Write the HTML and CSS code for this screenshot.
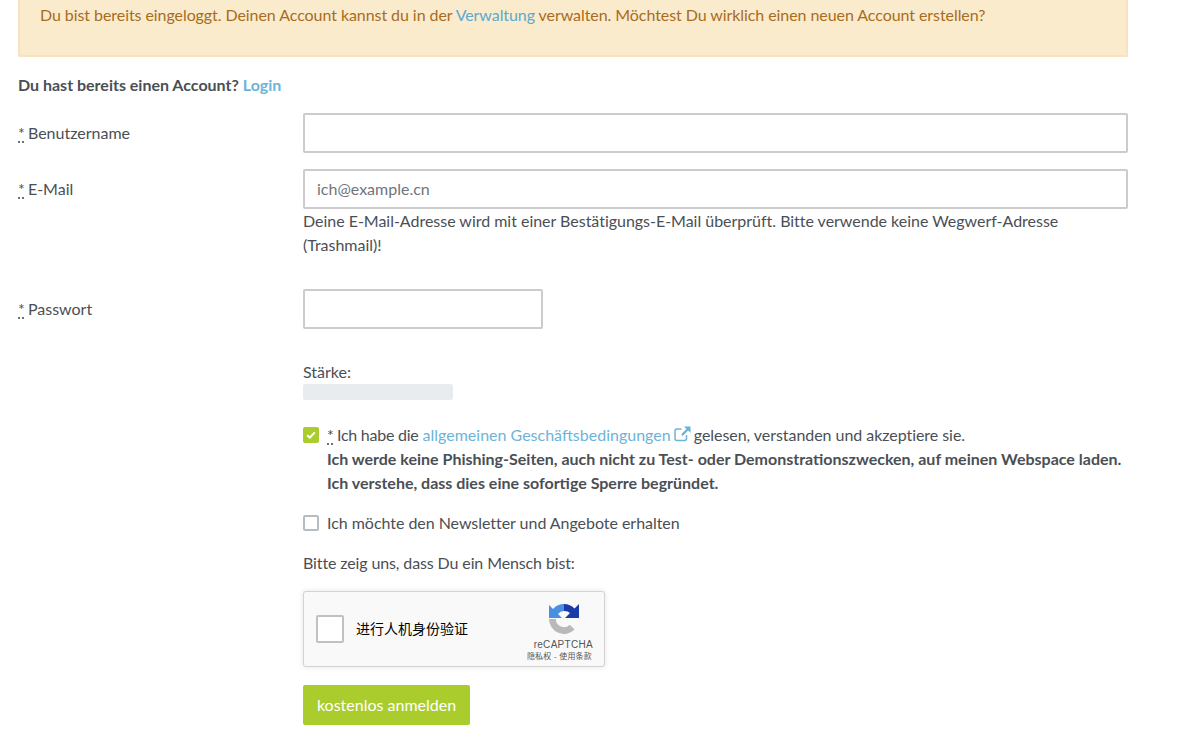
FILE: index.html
```html
<!DOCTYPE html>
<html lang="de">
<head>
<meta charset="utf-8">
<title>Registrieren</title>
<link rel="stylesheet" href="styles.css">
</head>
<body>
<main class="page">
  <div class="alert">Du bist bereits eingeloggt. Deinen Account kannst du in der <a href="#">Verwaltung</a> verwalten. Möchtest Du wirklich einen neuen Account erstellen?</div>
  <p class="login"><b>Du hast bereits einen Account? <a href="#">Login</a></b></p>
  <form class="form">
    <label class="label"><abbr>*</abbr> Benutzername</label>
    <div class="field"><input class="input" type="text"></div>

    <label class="label"><abbr>*</abbr> E-Mail</label>
    <div class="field field-help">
      <input class="input" type="text" placeholder="ich@example.cn">
      <p class="help">Deine E-Mail-Adresse wird mit einer Bestätigungs-E-Mail überprüft. Bitte verwende keine Wegwerf-Adresse (Trashmail)!</p>
    </div>

    <label class="label"><abbr>*</abbr> Passwort</label>
    <div class="field field-pass">
      <input class="input input-short" type="password">
      <div class="strength-label">Stärke:</div>
      <div class="strength"></div>
    </div>

    <div class="rest">
      <div class="check">
        <span class="box box-on"><svg width="10" height="8" viewBox="0 0 10 8"><path d="M1.2 4.2 3.8 6.600 8.800 1.400" fill="none" stroke="#fff" stroke-width="2"/></svg></span>
        <div><abbr>*</abbr> <span class="tight">Ich habe die</span> <a href="#">allgemeinen Geschäftsbedingungen<svg class="ext" width="17" height="16" viewBox="0 0 17 16"><path d="M12.500 9v3.500a2 2 0 0 1-2 2H3a2 2 0 0 1-2-2V5a2 2 0 0 1 2-2h4.500" fill="none" stroke="#6db3d9" stroke-width="1.500"/><path d="M10 0.500h6.500v6.500l-2.400-2.400-5.300 5.300-1.600-1.600 5.300-5.300z" fill="#6db3d9"/></svg></a> <span class="tail">gelesen, verstanden und akzeptiere sie.</span><br>
        <b>Ich werde keine Phishing-Seiten, auch nicht zu Test- oder Demonstrationszwecken, auf meinen Webspace laden.<br>Ich verstehe, dass dies eine sofortige Sperre begründet.</b></div>
      </div>
      <div class="check check-news">
        <span class="box"></span>
        <div class="news-text">Ich möchte den Newsletter und Angebote erhalten</div>
      </div>
      <p class="human">Bitte zeig uns, dass Du ein Mensch bist:</p>
      <div class="captcha">
        <span class="cap-box"></span>
        <span class="cap-text">进行人机身份验证</span>
        <div class="cap-logo">
          <svg class="cap-mark" width="32" height="32" viewBox="0 0 32 32">
            <path d="M16 1A15 15 0 0 0 5 6L1 2V15H14L10 11A8 8 0 0 1 16 8Z" fill="#4a90e2"/>
            <path d="M16 1A15 15 0 0 1 26.500 5.500L31 1V15H17L22 10A8 8 0 0 0 16 8Z" fill="#1c3aa9"/>
            <path d="M1 16A15 15 0 0 0 26.600 26.600L21.700 21.700A8 8 0 0 1 8 16Z" fill="#b9b9b9"/>
          </svg>
          <div class="cap-name">reCAPTCHA</div>
          <div class="cap-links">隐私权 - 使用条款</div>
        </div>
      </div>
      <button class="submit" type="button">kostenlos anmelden</button>
    </div>
  </form>
</main>
</body>
</html>
```

FILE: styles.css
```css
* { box-sizing: border-box; }
html, body { margin: 0; background: #fff; }
body {
  font-family: Lato, "Noto Sans CJK SC", sans-serif;
  font-size: 16px;
  line-height: 24px;
  color: #4a4f55;
  overflow: hidden;
}
a { color: #6db3d9; text-decoration: none; }
p { margin: 0; }
abbr { margin-right: -1px; text-decoration: underline dotted; text-underline-offset: 3px; }
.page { width: 1110px; margin-left: 18px; height: 746px; }
.alert {
  height: 57px;
  padding: 3px 20px 0;
  background: #faebcc;
  border: 2px solid #f9e2bd;
  border-top: 0;
  border-radius: 0 0 2px 2px;
  color: #a96b1e;
  letter-spacing: -.07px;
}
.alert a { color: #5da9cf; }
.login { margin-top: 16px; }
.form {
  display: grid;
  grid-template-columns: 285px 825px;
  margin-top: 16px;
}
.label { line-height: 40px; }
.field { height: 56px; }
.field-help { height: 120px; }
.field-pass { height: 134px; }
.input {
  display: block;
  width: 100%;
  height: 40px;
  padding: 0 12px 2px;
  border: 2px solid #ccc;
  border-radius: 2px;
  background: #fff;
  font: inherit;
  color: inherit;
  outline: 0;
}
.input::placeholder { color: #6f757b; opacity: 1; }
.input-short { width: 240px; }
.help { letter-spacing: -.02px; }
.strength-label { margin-top: 31px; }
.strength { width: 150px; height: 16px; background: #e9ecef; border-radius: 2px; }
.rest { grid-column: 2; }
.check { display: flex; gap: 8px; }
.check-news { margin-top: 16px; }
.tight { letter-spacing: -.25px; }
.tail { letter-spacing: -.05px; }
.news-text { letter-spacing: -.04px; }
.box {
  flex: none;
  display: flex;
  align-items: center;
  justify-content: center;
  width: 16px;
  height: 16px;
  margin-top: 4px;
  border: 2px solid #b4bcc4;
  border-radius: 2px;
  background: #fff;
}
.box-on { background: #aacd2d; border-color: #aacd2d; }
.ext { margin: 0 -1px 0 3px; vertical-align: -1px; }
.human { margin-top: 16px; letter-spacing: -.12px; }
.captcha {
  display: flex;
  align-items: center;
  width: 302px;
  height: 76px;
  margin-top: 16px;
  padding: 0 12px;
  background: #f9f9f9;
  border: 1px solid #d3d3d3;
  border-radius: 3px;
  box-shadow: 0 0 4px 1px rgba(0, 0, 0, .08);
  color: #000;
}
.cap-box {
  width: 28px;
  height: 28px;
  background: #fff;
  border: 2px solid #c1c1c1;
  border-radius: 2px;
}
.cap-text {
  margin: 0 0 2px 12px;
  font: 14px/17px "Noto Sans CJK SC", "Liberation Sans", sans-serif;
}
.cap-logo {
  display: flex;
  flex-direction: column;
  align-items: flex-end;
  margin: 7px -1px 0 auto;
  color: #555;
  font-family: "Liberation Sans", "Noto Sans CJK SC", sans-serif;
}
.cap-mark { margin-right: 13px; }
.cap-name { margin-top: 4px; font-size: 10px; line-height: 12px; letter-spacing: .3px; }
.cap-links { margin-right: 1px; font-size: 8px; line-height: 12px; letter-spacing: .2px; }
.submit {
  display: block;
  width: 167px;
  height: 40px;
  margin-top: 18px;
  padding: 0;
  border: 0;
  border-radius: 2px;
  background: #aacd2d;
  color: #fff;
  font: inherit;
}
```
